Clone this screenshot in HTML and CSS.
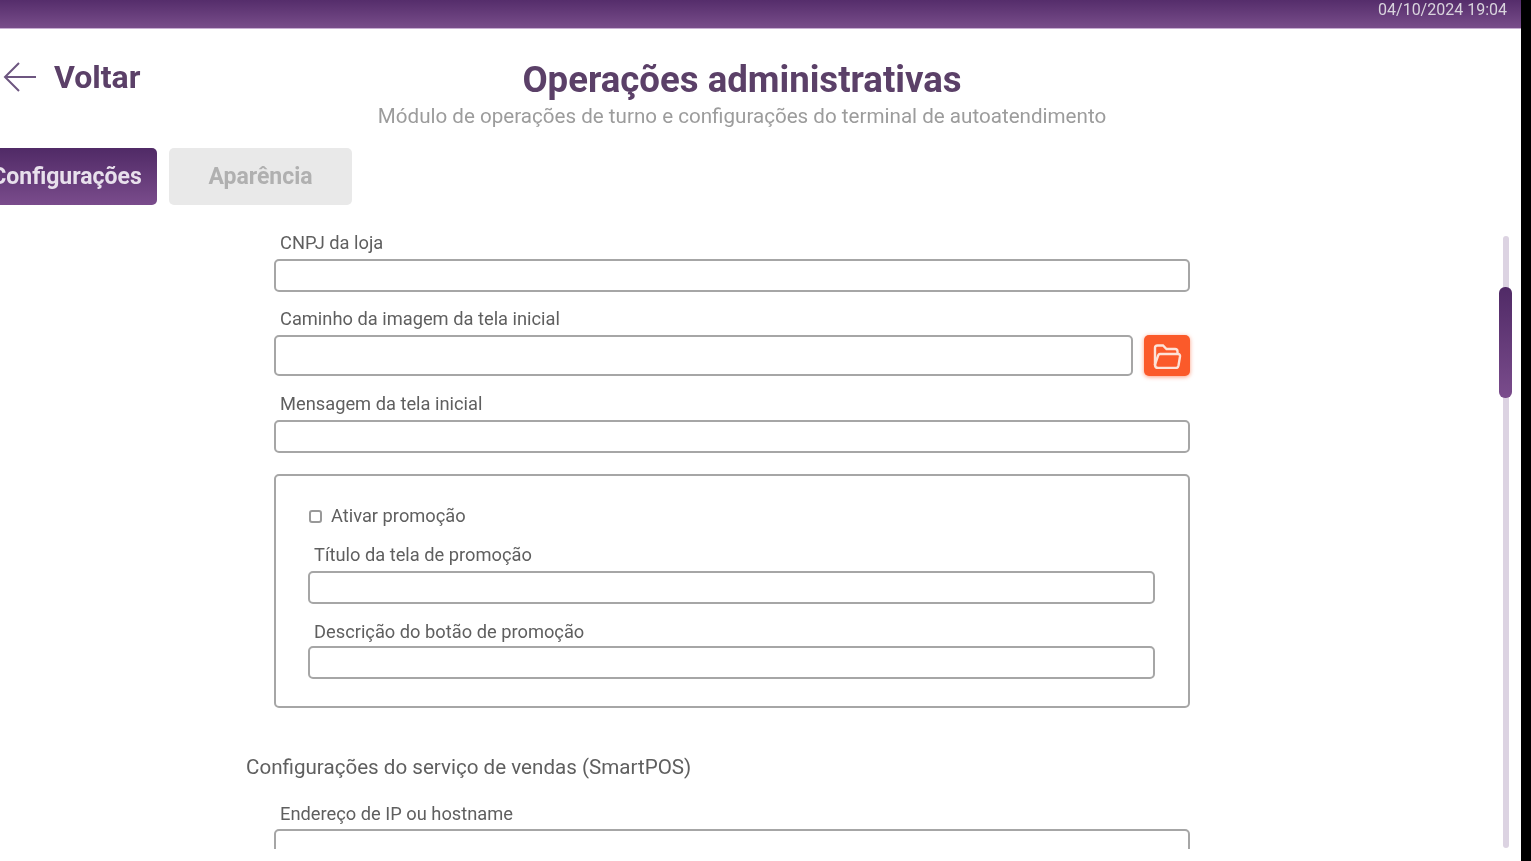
FILE: index.html
```html
<!DOCTYPE html>
<html lang="pt-BR">
<head>
    <meta charset="UTF-8">
    <meta name="viewport" content="width=device-width, initial-scale=1.0">
    <title>Operações administrativas</title>
    <link rel="stylesheet" href="styles.css">
</head>
<body>
    <div class="app">
        <div class="topbar">04/10/2024 19:04</div>

        <div class="header">
            <a class="back">
                <svg class="back-icon" viewBox="0 0 34 32" width="34" height="32">
                    <path d="M33 16H2M16 2L2 16l14 14" fill="none" stroke="#6d5680" stroke-width="2"/>
                </svg>
                Voltar
            </a>
            <div class="heading">
                <h1>Operações administrativas</h1>
                <p>Módulo de operações de turno e configurações do terminal de autoatendimento</p>
            </div>
        </div>

        <div class="tabs">
            <button class="tab active">Configurações</button>
            <button class="tab">Aparência</button>
        </div>

        <div class="content">
            <div class="form">
                <label class="field-label">CNPJ da loja</label>
                <div class="input"></div>

                <label class="field-label gap-image">Caminho da imagem da tela inicial</label>
                <div class="input-row">
                    <div class="input tall"></div>
                    <button class="folder-btn">
                        <svg viewBox="0 0 30 26" width="30" height="26">
                            <path d="M3 22V5c0-1.500 1-2.500 2.500-2.500H11L14.500 6H23c1.500 0 2.500 1 2.500 2.500V11" fill="none" stroke="#fde3d8" stroke-width="2.400"/>
                            <path d="M8 11h18c1.500 0 2.200 1 2 2.500l-1.500 9c-.3 1.500-1 2.500-2.500 2.500H6c-2 0-3-1.500-3-3.500L6 13c.3-1.200 1-2 2-2z" fill="none" stroke="#fde3d8" stroke-width="2.400"/>
                        </svg>
                    </button>
                </div>

                <label class="field-label gap-message">Mensagem da tela inicial</label>
                <div class="input"></div>

                <div class="promo-box">
                    <div class="check-row">
                        <span class="checkbox"></span>
                        <span>Ativar promoção</span>
                    </div>
                    <label class="field-label promo-title">Título da tela de promoção</label>
                    <div class="input"></div>
                    <label class="field-label promo-button">Descrição do botão de promoção</label>
                    <div class="input"></div>
                </div>

                <h2 class="section-title">Configurações do serviço de vendas (SmartPOS)</h2>

                <label class="field-label">Endereço de IP ou hostname</label>
                <div class="input"></div>
            </div>

            <div class="scroll-track"></div>
            <div class="scroll-thumb"></div>
        </div>
    </div>
</body>
</html>
```

FILE: styles.css
```css
html, body {
    margin: 0;
    height: 100%;
    background-color: #000;
    overflow: hidden;
}
body {
    font-family: Roboto, "Liberation Sans", sans-serif;
    color: #5f5f5f;
}
.app {
    width: 1521px;
    height: 861px;
    background-color: #fff;
    overflow: hidden;
    filter: blur(0.4px);
}
.topbar {
    height: 28px;
    padding-right: 14px;
    background: linear-gradient(180deg, #552d6b, #784d8a);
    border-bottom: 1px solid #c7aed2;
    color: #d9d4dd;
    font-size: 16px;
    line-height: 19px;
    text-align: right;
}
.header {
    position: relative;
    height: 119px;
}
.back {
    position: absolute;
    left: 3px;
    top: 30px;
    display: flex;
    align-items: center;
    gap: 17px;
    color: #5b4068;
    font-size: 32px;
    font-weight: 700;
    line-height: 36px;
}
.heading {
    width: 1484px;
    padding-top: 30px;
    text-align: center;
}
.heading h1 {
    margin: 0;
    color: #5b4068;
    font-size: 36.600px;
    font-weight: 700;
    line-height: 42px;
}
.heading p {
    margin: 3px 0 0;
    color: #9c9c9c;
    font-size: 20.600px;
    line-height: 24px;
}
.tabs {
    display: flex;
    gap: 12px;
    height: 57px;
    margin-left: -16px;
}
.tab {
    width: 173px;
    border: none;
    border-radius: 5px;
    background-color: #e9e9e9;
    color: #b0b0b0;
    font-family: inherit;
    font-size: 23px;
    font-weight: 700;
}
.tab.active {
    padding: 0 8px 0 0;
    background: linear-gradient(180deg, #502a66, #7a4c8c);
    color: #e8e0ec;
}
.tab + .tab {
    width: 183px;
}
.content {
    position: relative;
    height: 644px;
    overflow: hidden;
}
.form {
    width: 916px;
    margin-left: 274px;
    padding-top: 27px;
}
.field-label {
    display: block;
    margin-left: 6px;
    margin-bottom: 5px;
    font-size: 18.300px;
    line-height: 22px;
}
.input {
    box-sizing: border-box;
    height: 33px;
    border: 2px solid #a6a6a6;
    border-radius: 5px;
    background-color: #fff;
}
.gap-image {
    margin-top: 16px;
}
.input-row {
    display: flex;
    gap: 11px;
}
.input.tall {
    flex: 1;
    height: 41px;
}
.folder-btn {
    display: flex;
    align-items: center;
    justify-content: center;
    width: 46px;
    height: 41px;
    padding: 0;
    border: none;
    border-radius: 5px;
    background-color: #fb5a2a;
    box-shadow: 0 1px 4px rgba(251,90,42,0.6);
}
.gap-message {
    margin-top: 17px;
}
.promo-box {
    box-sizing: border-box;
    height: 234px;
    margin-top: 21px;
    padding: 29px 33px 0 32px;
    border: 2px solid #a6a6a6;
    border-radius: 5px;
}
.check-row {
    display: flex;
    align-items: center;
    gap: 9px;
    margin-left: 1px;
    font-size: 18.300px;
    line-height: 22px;
}
.checkbox {
    box-sizing: border-box;
    width: 13px;
    height: 13px;
    border: 2px solid #999;
    border-radius: 3px;
}
.promo-title {
    margin-top: 17px;
}
.promo-button {
    margin-top: 17px;
    margin-bottom: 3px;
}
.section-title {
    margin: 46px 0 0 -28px;
    font-size: 20.600px;
    font-weight: 400;
    line-height: 26px;
}
.section-title + .field-label {
    margin-top: 23px;
    margin-bottom: 4px;
}
.scroll-track {
    position: absolute;
    left: 1503px;
    top: 31px;
    width: 6px;
    height: 612px;
    border-radius: 3px;
    background-color: #dcd3e2;
}
.scroll-thumb {
    position: absolute;
    left: 1499px;
    top: 82px;
    width: 13px;
    height: 111px;
    border-radius: 6px;
    background: linear-gradient(180deg, #502a66, #7a4c8c);
}
```
